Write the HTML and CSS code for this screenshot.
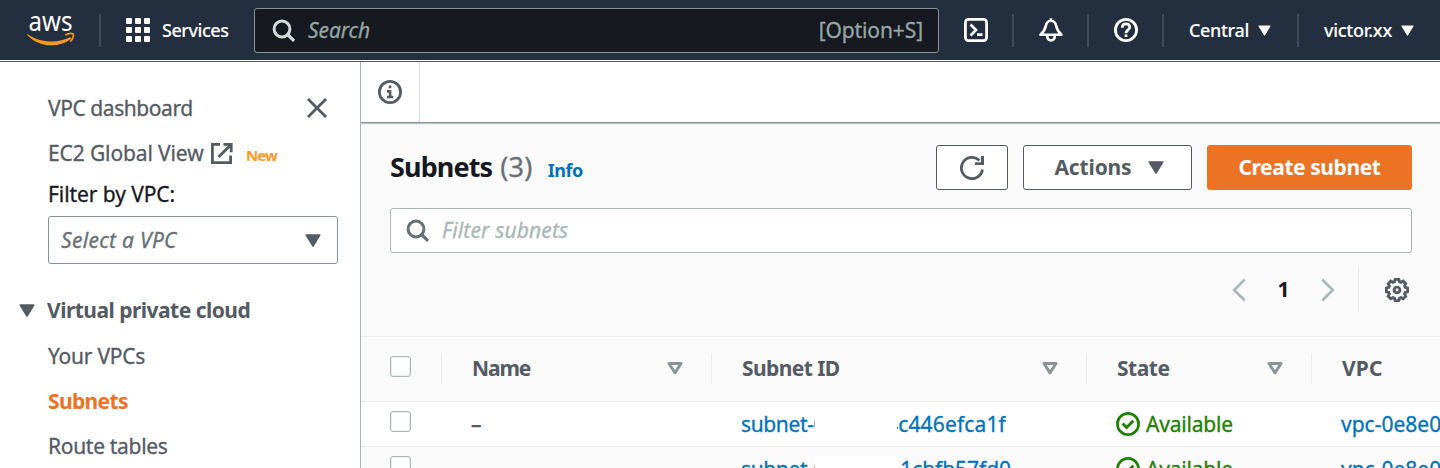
FILE: index.html
```html
<!DOCTYPE html>
<html lang="en">
<head>
<meta charset="utf-8">
<title>Subnets | VPC Console</title>
<link rel="stylesheet" href="styles.css">
</head>
<body>
<svg class="defs" width="0" height="0">
  <symbol id="caret" viewBox="0 0 16 13"><path d="M1.300 1h13.400L8 12z" fill="currentColor" stroke="currentColor" stroke-width="1.600" stroke-linejoin="round"/></symbol>
  <symbol id="sort" viewBox="0 0 16 13"><path d="M2 1.500h12L8 10.900z" fill="none" stroke="currentColor" stroke-width="2.900" stroke-linejoin="round"/></symbol>
  <symbol id="search" viewBox="0 0 24 24"><circle cx="10" cy="10" r="7.900" fill="none" stroke="currentColor" stroke-width="3"/><path d="M15.500 15.500l6.600 6.400" stroke="currentColor" stroke-width="3.200"/></symbol>
  <symbol id="ok" viewBox="0 0 24 24"><g fill="none" stroke="currentColor"><circle cx="12" cy="12" r="10.600" stroke-width="2.700"/><path d="M6.600 11.500l4 4 6.800-6.800" stroke-width="3"/></g></symbol>
</svg>

<header class="topbar">
  <svg class="logo" viewBox="0 0 48 32" role="img" aria-label="aws">
    <text x="1.500" y="17.800" textLength="44" lengthAdjust="spacingAndGlyphs">aws</text>
    <path d="M.8 21.300C13 29.700 29 31 42.300 24.500c1.500-.7 2.500.7 1.200 1.700C31 35.500 12 34.200.3 22.200c-.5-.6-.1-1.200.5-.9z" fill="#f7981f"/>
    <path d="M38.300 22c3-1.700 6.300-1.900 7.800-1.200.9 1.100-.1 5.300-2.800 7.800" fill="none" stroke="#f7981f" stroke-width="1.700"/>
  </svg>
  <i class="bar bar-logo"></i>
  <svg class="apps" viewBox="0 0 24 24" fill="#fff"><rect width="6" height="6" rx="1"/><rect x="9" width="6" height="6" rx="1"/><rect x="18" width="6" height="6" rx="1"/><rect y="9" width="6" height="6" rx="1"/><rect x="9" y="9" width="6" height="6" rx="1"/><rect x="18" y="9" width="6" height="6" rx="1"/><rect y="18" width="6" height="6" rx="1"/><rect x="9" y="18" width="6" height="6" rx="1"/><rect x="18" y="18" width="6" height="6" rx="1"/></svg>
  <span class="nav services">Services</span>
  <div class="global-search">
    <svg class="i24"><use href="#search"/></svg>
    <em>Search</em><span>[Option+S]</span>
  </div>
  <svg class="i24 shell" viewBox="0 0 24 24" fill="none" stroke="#fff"><rect x="1.400" y="1.400" width="21.200" height="21.200" rx="3" stroke-width="2.800"/><path d="M6.500 6.500L12 12l-5.500 5.500M13 16.700h5.500" stroke-width="2.700"/></svg>
  <i class="bar"></i>
  <svg class="i24" viewBox="0 0 24 24" fill="none" stroke="#fff" stroke-width="2.600" stroke-linejoin="round"><path d="M12 .3v2.500M12 2.800c-3.200 0-4.700 2.300-5.300 5.500-.7 3.700-2 5.600-5.200 8.500h21c-3.200-2.900-4.500-4.800-5.200-8.500-.6-3.200-2.100-5.500-5.300-5.500zM8.300 17.200v1.600a3.700 3.700 0 0 0 7.400 0v-1.600"/></svg>
  <i class="bar"></i>
  <svg class="i24" viewBox="0 0 24 24" fill="none" stroke="#fff"><circle cx="12" cy="12" r="10.600" stroke-width="2.800"/><path d="M8.200 9.700c0-2.500 1.600-3.800 3.800-3.800s3.800 1.300 3.800 3.400c0 2.600-3.800 2.700-3.800 5.900M12 16.400v2.600" stroke-width="2.700"/></svg>
  <i class="bar"></i>
  <span class="nav central">Central</span><svg class="caret-top"><use href="#caret"/></svg>
  <i class="bar bar-user"></i>
  <span class="nav user">victor.xx</span><svg class="caret-top"><use href="#caret"/></svg>
</header>

<div class="page">
  <nav class="sidebar">
    <div class="item"><span class="t-dash">VPC dashboard</span>
      <svg class="close" viewBox="0 0 20 20"><path d="M1 1l18 18M19 1L1 19" stroke="currentColor" stroke-width="2.800"/></svg></div>
    <div class="item"><span class="t-ec2">EC2 Global View</span>
      <svg class="external" viewBox="0 0 22 21" fill="none" stroke="currentColor" stroke-width="2.800"><path d="M9 1.400H1.400v18.200h18.200V12.500M12.500 1.400h7.700v7.800M19.700 1.900L7.500 14"/></svg>
      <b class="new">New</b></div>
    <div class="filter-label">Filter by VPC:</div>
    <div class="select"><em>Select a VPC</em><svg class="caret"><use href="#caret"/></svg></div>
    <div class="group"><svg class="caret"><use href="#caret"/></svg><b>Virtual private cloud</b></div>
    <div class="item t-your">Your VPCs</div>
    <div class="item active">Subnets</div>
    <div class="item t-route">Route tables</div>
  </nav>

  <main class="main">
    <div class="toolbar"><div class="info-tab">
      <svg class="i24" viewBox="0 0 24 24" fill="none" stroke="currentColor"><circle cx="12" cy="12" r="10.600" stroke-width="2.800"/><path d="M12 5.500v2.800M9 11.400h3.100v5M9 17h6.200" stroke-width="2.600"/></svg>
    </div></div>
    <section class="panel">
      <div class="heading">
        <h1>Subnets</h1><span class="count">(3)</span><a class="info">Info</a>
        <div class="buttons">
          <div class="btn refresh"><svg class="i24" viewBox="0 0 24 24"><path d="M22.500 13.500A10.600 10.600 0 1 1 19.500 4.500" fill="none" stroke="currentColor" stroke-width="2.800"/><path d="M21 0h3v9h-9V6.200h6z" fill="currentColor"/></svg></div>
          <div class="btn actions"><span>Actions</span><svg class="caret"><use href="#caret"/></svg></div>
          <div class="btn create">Create subnet</div>
        </div>
      </div>
      <div class="filter"><svg class="i24"><use href="#search"/></svg><em>Filter subnets</em></div>
      <div class="pager">
        <svg viewBox="0 0 14 24"><path d="M12.700 1.500L2.200 12l10.500 10.500"/></svg>
        <b>1</b>
        <svg viewBox="0 0 14 24"><path d="M1.300 1.500L11.800 12 1.300 22.500"/></svg>
        <i></i>
        <svg class="gear" viewBox="0 0 24 24"><path d="M10.200 1.400h3.600l.7 2.300 1.400.6 2.200-1.200 2.600 2.600-1.100 2.200.6 1.500 2.400.7v3.600l-2.400.8-.6 1.400 1.100 2.300-2.500 2.500-2.300-1.100-1.400.6-.7 2.400h-3.600l-.8-2.400-1.400-.6-2.200 1.100-2.600-2.500 1.200-2.300-.6-1.400-2.400-.8v-3.600l2.400-.7.6-1.500-1.200-2.200 2.600-2.600L8 4.300l1.400-.6z"/><circle cx="12" cy="12" r="2.900"/></svg>
      </div>
    </section>
    <section class="table">
      <div class="row head">
        <div class="check"><i></i></div>
        <div class="cell"><span class="h-name">Name</span><svg class="caret"><use href="#sort"/></svg></div>
        <div class="cell"><span class="h-subnet">Subnet ID</span><svg class="caret"><use href="#sort"/></svg></div>
        <div class="cell"><span class="h-state">State</span><svg class="caret"><use href="#sort"/></svg></div>
        <div class="cell"><span class="h-vpc">VPC</span></div>
      </div>
      <div class="row">
        <div class="check"><i></i></div>
        <div class="cell dash">–</div>
        <div class="cell link"><span class="id-start">subnet-0</span><span class="mask"></span><span class="id-end">4c446efca1f</span></div>
        <div class="cell ok"><svg class="i24"><use href="#ok"/></svg>Available</div>
        <div class="cell link vpc">vpc-0e8e0</div>
      </div>
      <div class="row alt">
        <div class="check"><i></i></div>
        <div class="cell"></div>
        <div class="cell link"><span class="id-start">subnet-0</span><span class="mask wide"></span><span class="id-end second">1cbfb57fd0</span></div>
        <div class="cell ok"><svg class="i24"><use href="#ok"/></svg>Available</div>
        <div class="cell link vpc">vpc-0e8e0</div>
      </div>
    </section>
  </main>
</div>
</body>
</html>
```
FILE: styles.css
```css
* { box-sizing: border-box; }
body {
  margin: 0;
  height: 468px;
  overflow: hidden;
  font: 400 21px/45px "Noto Sans", sans-serif;
  -webkit-text-stroke: .3px currentColor;
  color: #545b64;
  background: #fff;
}
b, h1, .buttons, .head, .active, .info { -webkit-text-stroke-width: 0; }
svg { display: block; flex: none; }
.defs { position: absolute; }
.i24 { width: 24px; height: 24px; }
.caret { width: 16px; height: 13px; }

/* Top navigation */
.topbar {
  display: flex;
  align-items: center;
  height: 60px;
  padding-left: 27px;
  background: #232f3e;
  color: #fff;
  white-space: nowrap;
}
.logo { width: 48px; height: 32px; margin-top: -2px; overflow: visible; }
.logo text { font: 400 27px "Noto Sans", sans-serif; fill: #fff; }
.bar { flex: none; width: 2px; height: 33px; margin: 1px 25px 0 24px; background: #424a55; }
.apps { width: 24px; height: 24px; }
.nav { font-size: 18px; font-weight: 500; -webkit-text-stroke-width: .1px; }
.services { width: 92px; padding-left: 12px; letter-spacing: -.45px; }
.global-search {
  display: flex;
  align-items: center;
  flex: none;
  width: 685px;
  height: 45px;
  margin: 1px 25px 0 12px;
  padding: 0 15px 0 17px;
  border: 1px solid #879596;
  border-radius: 3px;
  background: #16191f;
  color: #95a5a6;
  line-height: 43px;
}
.global-search svg { color: #d5dbdb; }
.global-search em { margin-left: 12px; letter-spacing: -.1px; }
.global-search span { margin-left: auto; letter-spacing: -.1px; }
.central { letter-spacing: -.35px; }
.user { letter-spacing: -.25px; }
.caret-top { width: 13px; height: 11px; margin-left: 9px; }
.bar-user { margin-left: 26px; margin-right: 25px; }

/* Page frame */
.page {
  display: flex;
  height: 407px;
  margin-top: 1px;
  border-top: 1px solid #545b64;
  overflow: hidden;
}
.sidebar {
  flex: none;
  width: 361px;
  padding: 24px 22px 0 0;
  border-right: 1px solid #aab7b8;
  white-space: nowrap;
}
.item { display: flex; align-items: center; height: 45px; padding-left: 48px; }
.t-dash { letter-spacing: -.43px; }
.t-ec2 { width: 155px; letter-spacing: -.12px; }
.t-your { letter-spacing: -.25px; }
.close { width: 20px; height: 20px; margin: -2px 11px 0 auto; }
.external { width: 22px; height: 21px; margin: 0 13px 0 8px; }
.new { color: #ff9821; font-size: 15px; letter-spacing: -.9px; padding-top: 4px; }
.filter-label { height: 35px; padding-left: 48px; line-height: 36px; color: #16191f; letter-spacing: -.08px; }
.select {
  display: flex;
  align-items: center;
  justify-content: space-between;
  height: 48px;
  margin: 5px 0 23px 48px;
  padding: 0 16px 0 12px;
  border: 1px solid #879596;
  border-radius: 3px;
  color: #687078;
}
.select em { letter-spacing: .3px; }
.select svg { color: #545b64; }
.group { display: flex; align-items: center; gap: 12px; height: 46px; margin-bottom: 1px; padding-left: 19px; letter-spacing: -.52px; }
.active { color: #ec7224; font-weight: 700; letter-spacing: -.65px; }
.t-route { letter-spacing: -.3px; }

/* Main column */
.main { flex: 1; min-width: 0; }
.toolbar { position: relative; height: 61px; border-bottom: 1px solid #879596; box-shadow: 0 1px 1px #b9c2c4; }
.info-tab { width: 59px; height: 60px; padding: 18px 0 0 17px; border-right: 1px solid #d5dbdb; }
.panel { height: 213px; padding: 22px 28px 0 29px; background: #fafafa; }
.heading { display: flex; align-items: center; height: 45px; }
h1 { margin: -2px 0 0; font-size: 27px; color: #16191f; letter-spacing: -.9px; }
.count { margin: -2px 0 0 8px; font-size: 27px; color: #687078; letter-spacing: .3px; }
.info { margin-left: 15px; padding-top: 5px; font-size: 18px; font-weight: 700; color: #0073bb; letter-spacing: -.48px; }
.buttons { display: flex; gap: 15px; margin-left: auto; font-weight: 700; }
.btn {
  display: flex;
  align-items: center;
  justify-content: center;
  height: 45px;
  border: 1px solid #545b64;
  border-radius: 3px;
  background: #fff;
  line-height: 42px;
}
.btn span { margin-top: -1px; }
.refresh { width: 72px; }
.actions { width: 169px; gap: 16px; padding-left: 3px; letter-spacing: -.15px; }
.create { width: 205px; padding-bottom: 1px; border-color: #ec7224; background: #ec7224; color: #fff; letter-spacing: -.42px; }
.filter {
  display: flex;
  align-items: center;
  height: 45px;
  margin-top: 18px;
  padding-left: 15px;
  border: 1px solid #aab7b8;
  border-radius: 3px;
  background: #fff;
  color: #aab7b8;
  line-height: 43px;
}
.filter svg { color: #687078; }
.filter em { margin-left: 12px; letter-spacing: .15px; }
.pager { display: flex; align-items: center; justify-content: flex-end; height: 45px; margin-top: 14px; padding-right: 3px; }
.pager svg { width: 14px; height: 24px; fill: none; stroke: #aab7b8; stroke-width: 2.6; }
.pager b { width: 75px; text-align: center; color: #16191f; }
.pager i { width: 1px; height: 45px; margin: 0 26px 0 23px; background: #eaeded; }
.pager .gear { width: 24px; stroke: #545b64; stroke-width: 2.9; }

/* Subnet table */
.row { display: grid; grid-template-columns: 80px 270px 375px 225px 129px; height: 45px; border-bottom: 1px solid #eaeded; white-space: nowrap; }
.head { height: 66px; border-top: 1px solid #eaeded; background: #fafafa; font-weight: 700; align-items: center; }
.alt { background: #fafafa; }
.check { padding: 9px 0 0 29px; }
.head .check { align-self: start; padding: 19px 0 0 29px; }
.check i { display: block; width: 21px; height: 21px; border: 1px solid #aab7b8; border-radius: 3px; background: #fff; box-shadow: inset 0 0 0 1px #eaeded; }
.cell { display: flex; align-items: center; height: 44px; padding-left: 30px; overflow: hidden; }
.head .cell { height: 31px; margin-top: -2px; padding: 0 28px 0 30px; border-left: 1px solid #eaeded; justify-content: space-between; overflow: visible; }
.head .caret { color: #879596; }
.h-name { letter-spacing: -1.1px; }
.h-subnet { letter-spacing: -.58px; }
.h-state { letter-spacing: -.5px; }
.h-vpc { letter-spacing: .2px; }
.dash { font-weight: 500; }
.link { color: #0073bb; }
.id-start { width: 74px; overflow: hidden; letter-spacing: -.36px; }
.mask { width: 82px; height: 44px; background: #fff; }
.wide { width: 85px; height: 35px; align-self: flex-end; }
.id-end { display: flex; justify-content: flex-end; width: 109px; overflow: hidden; letter-spacing: .15px; }
.second { width: 111px; letter-spacing: -.05px; }
.ok { gap: 6px; color: #1d8102; letter-spacing: -.2px; }
.vpc { letter-spacing: 0; }
```
